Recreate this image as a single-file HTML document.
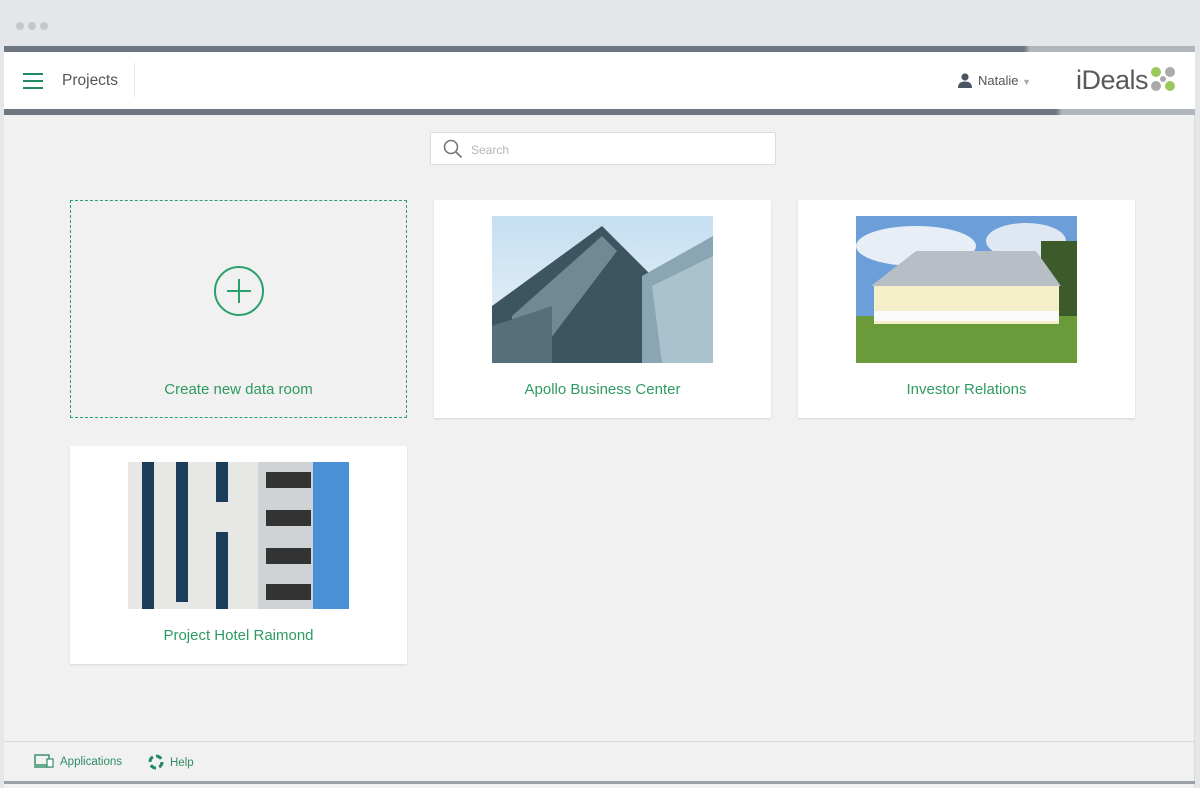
<!DOCTYPE html>
<html><head><meta charset="utf-8"><style>
*{box-sizing:border-box;margin:0;padding:0}
body{width:1200px;height:788px;background:#e4e7ea;font-family:"Liberation Sans",sans-serif;position:relative;overflow:hidden}
.dots{position:absolute;left:16px;top:17px}
.dots span{display:inline-block;width:8px;height:8px;border-radius:50%;background:#c4c7cb;margin-right:4px}
.frame{position:absolute;left:4px;top:46px;width:1191px;height:742px;background:#f1f1f1;border-right:1px solid #dcdcdc}
.bar1{position:absolute;left:0;top:0;width:1191px;height:6px;background:linear-gradient(90deg,#6c7782 0,#6c7782 1020px,#b1b6bc 1026px)}
.hdr{position:absolute;left:0;top:6px;width:1191px;height:57px;background:#fff}
.bar2{position:absolute;left:0;top:63px;width:1191px;height:6px;background:linear-gradient(90deg,#6c7782 0,#6c7782 1052px,#b1b6bc 1058px)}
.burger{position:absolute;left:19px;top:21px;width:20px}
.burger i{display:block;height:2px;background:#1e8a5e;margin-bottom:5px}
.proj{position:absolute;left:58px;top:20px;font-size:15.5px;color:#555}
.sep{position:absolute;left:130px;top:11px;width:1px;height:34px;background:#e5e5e5}
.user{position:absolute;left:953px;top:20px;font-size:13px;color:#555}
.logo{position:absolute;left:1072px;top:13px;font-size:27px;color:#5a5a5a;letter-spacing:-0.5px}
.search{position:absolute;left:426px;top:86px;width:346px;height:33px;background:#fff;border:1px solid #dcdcdc;border-radius:2px}
.search span{position:absolute;left:40px;top:10px;font-size:12px;color:#b5b5b5}
.card{position:absolute;width:337px;height:218px;background:#fff;box-shadow:0 1px 2px rgba(0,0,0,.12)}
.card .t{position:absolute;left:0;right:0;top:181px;text-align:center;font-size:15px;color:#2f9a62}
.card svg.img{position:absolute;left:58px;top:16px}
.new{background:none;box-shadow:none;border:1px dashed #2aa06a}
.foot{position:absolute;left:0;top:695px;width:1191px;height:1px;background:#d8d8d8}
.fb{position:absolute;left:0;top:735px;width:1191px;height:3px;background:#9aa0a5}
.fl{position:absolute;top:708px;font-size:11.5px;color:#2f8c66}
</style></head><body>
<div class="dots"><span></span><span></span><span></span></div>
<div class="frame">
<div class="bar1"></div>
<div class="hdr">
 <div class="burger"><i></i><i></i><i></i></div>
 <div class="proj">Projects</div>
 <div class="sep"></div>
 <div class="user"><svg width="16" height="16" viewBox="0 0 16 16" style="vertical-align:-3px;margin-right:5px"><circle cx="8" cy="5" r="3.6" fill="#4a5563"/><path d="M1 16c0-5 3-6.5 7-6.5s7 1.5 7 6.5z" fill="#4a5563"/></svg>Natalie <span style="color:#aaa;font-size:9px">▼</span></div>
 <div class="logo">iDeals<svg width="26" height="26" viewBox="0 0 26 26" style="vertical-align:-3px;margin-left:2px"><circle cx="6" cy="6" r="5" fill="#9bc85a"/><circle cx="20" cy="6" r="5" fill="#aaa"/><circle cx="6" cy="20" r="5" fill="#aaa"/><circle cx="20" cy="20" r="5" fill="#9bc85a"/><circle cx="13" cy="13" r="3" fill="#aaa"/></svg></div>
</div>
<div class="bar2"></div>
<div class="search"><svg width="20" height="20" viewBox="0 0 20 20" style="position:absolute;left:12px;top:6px"><circle cx="8" cy="8" r="6.5" fill="none" stroke="#777" stroke-width="1.6"/><path d="M13 13l5.5 5.5" stroke="#777" stroke-width="1.8"/></svg><span>Search</span></div>

<div class="card new" style="left:66px;top:154px">
 <svg width="52" height="52" viewBox="0 0 52 52" style="position:absolute;left:142px;top:64px"><circle cx="26" cy="26" r="24" fill="none" stroke="#2aa06a" stroke-width="2"/><path d="M26 14v24M14 26h24" stroke="#2aa06a" stroke-width="2"/></svg>
 <div class="t" style="top:180px">Create new data room</div>
</div>
<div class="card" style="left:430px;top:154px">
 <svg class="img" width="221" height="147"><defs><linearGradient id="s1" x1="0" y1="0" x2="0" y2="1"><stop offset="0" stop-color="#c5dff2"/><stop offset="1" stop-color="#eef4f8"/></linearGradient></defs><rect width="221" height="147" fill="url(#s1)"/><path d="M0 90L110 10L160 60L160 147L0 147Z" fill="#3c5560"/><path d="M20 100L110 20L125 35L40 147L20 147Z" fill="#6f8a95"/><path d="M150 60L221 20L221 147L150 147Z" fill="#8aa6b4"/><path d="M160 70L221 40L221 147L170 147Z" fill="#a9c2cd"/><path d="M0 110L60 90L60 147L0 147Z" fill="#56707a"/></svg>
 <div class="t">Apollo Business Center</div>
</div>
<div class="card" style="left:794px;top:154px">
 <svg class="img" width="221" height="147"><rect width="221" height="100" fill="#6c9fd9"/><ellipse cx="60" cy="30" rx="60" ry="20" fill="#e8eef6"/><ellipse cx="170" cy="25" rx="40" ry="18" fill="#dfe7f2"/><rect x="185" y="25" width="36" height="80" fill="#3d5a2b"/><rect y="100" width="221" height="47" fill="#6a9a3a"/><path d="M15 70L60 35L180 35L205 70Z" fill="#b8bec6"/><rect x="18" y="70" width="185" height="38" fill="#f4efc8"/><rect x="18" y="95" width="185" height="10" fill="#fafafa"/></svg>
 <div class="t">Investor Relations</div>
</div>
<div class="card" style="left:66px;top:400px">
 <svg class="img" width="221" height="147"><rect width="221" height="147" fill="#e7e7e5"/><rect x="180" width="41" height="147" fill="#4a90d6"/><rect x="130" y="0" width="55" height="147" fill="#cfd3d6"/><g fill="#1c3d5a"><rect x="14" y="0" width="12" height="147"/><rect x="48" y="0" width="12" height="140"/><rect x="88" y="0" width="12" height="40"/><rect x="88" y="70" width="12" height="77"/></g><g fill="#333"><rect x="138" y="10" width="45" height="16"/><rect x="138" y="48" width="45" height="16"/><rect x="138" y="86" width="45" height="16"/><rect x="138" y="122" width="45" height="16"/></g></svg>
 <div class="t">Project Hotel Raimond</div>
</div>

<div class="foot"></div>
<div class="fl" style="left:30px"><svg width="20" height="14" viewBox="0 0 20 14" style="vertical-align:-3px;margin-right:6px"><rect x="1" y="1" width="14" height="10" fill="none" stroke="#2f8c66" stroke-width="1.4"/><path d="M0 13h16" stroke="#2f8c66" stroke-width="1.4"/><rect x="13" y="5" width="6" height="8" fill="#fff" stroke="#2f8c66" stroke-width="1.2"/></svg>Applications</div>
<div class="fl" style="left:144px"><svg width="16" height="16" viewBox="0 0 16 16" style="vertical-align:-4px;margin-right:6px"><circle cx="8" cy="8" r="6" fill="none" stroke="#1e8a5e" stroke-width="3" stroke-dasharray="6 3.4"/></svg>Help</div>
<div class="fb"></div>
</div>
</body></html>
